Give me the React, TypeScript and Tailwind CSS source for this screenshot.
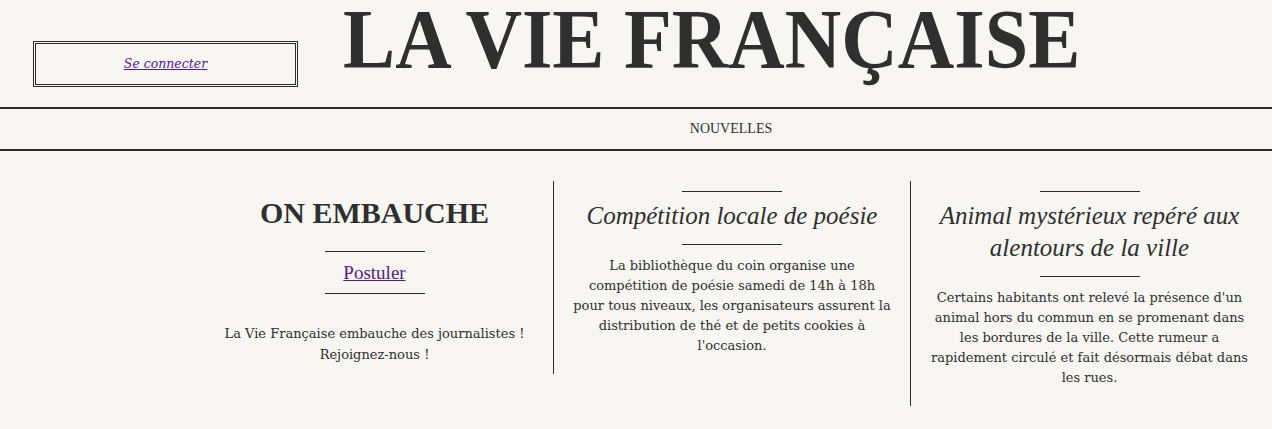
import React from "react";

const serif = "font-['Liberation_Serif',serif]";
const body = "font-['DejaVu_Serif',serif]";

function Rule({ className = "" }: { className?: string }) {
  return <div className={`mx-auto h-px w-[100px] bg-[#2b2b2b] ${className}`} />;
}

export default function App() {
  return (
    <div className={`min-h-[429px] w-[1272px] bg-[#f7f6f2] text-[#2f2f2f] ${serif}`}>
      <header className="flex h-[109px] items-start border-b-2 border-[#2b2b2b]">
        <div className="ml-[33px] mt-[41px] flex h-[46px] w-[265px] shrink-0 items-center justify-center border-[3px] border-double border-[#2b2b2b]">
          <a href="#" className={`${body} text-[12.5px] italic text-[#551a8b] underline`}>
            Se connecter
          </a>
        </div>
        <h1 className="ml-[45px] mt-0 origin-left scale-x-[0.92] whitespace-nowrap text-[85px] font-bold leading-[78px]">
          LA VIE FRANÇAISE
        </h1>
      </header>
      <nav className="flex h-[42px] items-center justify-center border-b-2 border-[#2b2b2b] pl-[190px]">
        <span className="text-[14px] leading-[40px]">NOUVELLES</span>
      </nav>
      <main className="mt-[30px] flex items-start pl-[196px]">
        <section className="w-[357px] px-[10px] pt-[10px] text-center">
          <h2 className="mt-[2px] text-[30px] font-bold leading-[40px]">ON EMBAUCHE</h2>
          <Rule className="mt-[18px]" />
          <div className="mt-[7px] text-[19px] leading-[28px]">
            <a href="#" className="text-[#551a8b] underline">
              Postuler
            </a>
          </div>
          <Rule className="mt-[6px]" />
          <p className={`${body} mt-[29px] whitespace-nowrap text-[13px] leading-[21px]`}>
            La Vie Française embauche des journalistes !<br />
            Rejoignez-nous !
          </p>
        </section>
        <section className="w-[357px] border-l border-[#2b2b2b] px-[10px] pb-[18px] pt-[10px] text-center">
          <Rule />
          <h2 className="mt-[8px] text-[25px] italic leading-[32px]">Compétition locale de poésie</h2>
          <Rule className="mt-[12px]" />
          <p className={`${body} mt-[11px] whitespace-nowrap text-[13px] leading-[20px]`}>
            La bibliothèque du coin organise une
            <br />
            compétition de poésie samedi de 14h à 18h
            <br />
            pour tous niveaux, les organisateurs assurent la
            <br />
            distribution de thé et de petits cookies à
            <br />
            l'occasion.
          </p>
        </section>
        <section className="w-[358px] border-l border-[#2b2b2b] px-[10px] pb-[18px] pt-[10px] text-center">
          <Rule />
          <h2 className="mt-[8px] text-[25px] italic leading-[32px]">
            Animal mystérieux repéré aux
            <br />
            alentours de la ville
          </h2>
          <Rule className="mt-[12px]" />
          <p className={`${body} mt-[11px] whitespace-nowrap text-[13px] leading-[20px]`}>
            Certains habitants ont relevé la présence d'un
            <br />
            animal hors du commun en se promenant dans
            <br />
            les bordures de la ville. Cette rumeur a
            <br />
            rapidement circulé et fait désormais débat dans
            <br />
            les rues.
          </p>
        </section>
      </main>
    </div>
  );
}
